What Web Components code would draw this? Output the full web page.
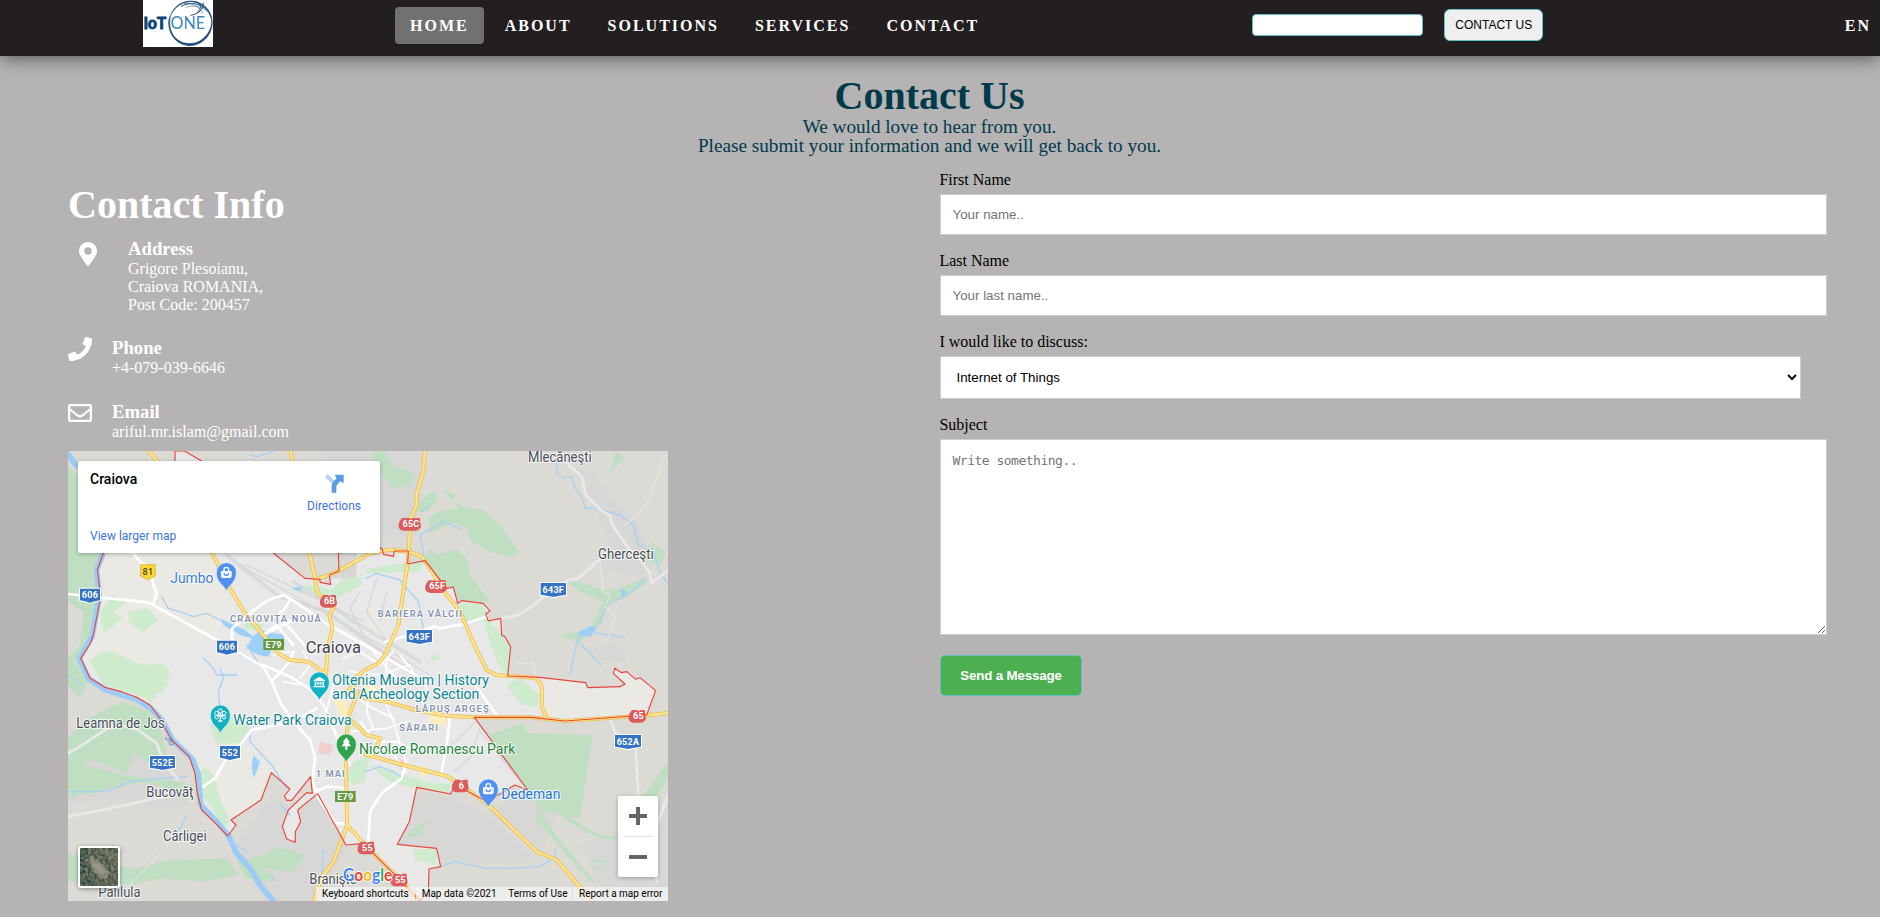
<!DOCTYPE html>
<html lang="en">
<head>
<meta charset="utf-8">
<title>Contact Us</title>
<style>
body{margin:0;background:#b5b3b4;font-family:"Liberation Serif","Times New Roman",serif;font-size:16px;line-height:18px;overflow:hidden}
</style>
</head>
<body>
<contact-page></contact-page>
<script>
const define=(name,html)=>{
  const t=document.createElement('template');t.innerHTML=html;
  customElements.define(name,class extends HTMLElement{
    constructor(){super();this.attachShadow({mode:'open'}).append(t.content.cloneNode(true));}
  });
};

define('site-logo',`
<style>:host{display:block;width:70px;height:47px}svg{display:block}</style>
<svg width="70" height="47" viewBox="15 0 208 141" preserveAspectRatio="none">
<rect x="15" width="208" height="141" fill="#fff"/>
<path d="M98 44C108 16 134 2 160 3C198 6 222 36 221 70C219 108 190 135 158 137C122 138 92 112 91 68C91 59 94 50 98 44M98 44C90 68 95 100 116 118C138 136 172 134 192 117C208 104 218 86 219 66C218 36 196 10 160 5C134 5 112 18 98 44Z" fill="#1c4a78" stroke="#1c4a78" stroke-width="1.5" fill-rule="evenodd"/>
<g fill="none" stroke="#174675" stroke-width="2.8"><path d="M128 19C150 8 170 9 186 17S212 36 218 52"/><path d="M136 11C160 6 186 22 192 40" stroke-width="1.6"/><path d="M156 46C180 42 194 30 194 8"/><path d="M170 4C190 12 190 24 176 38"/><path d="M142 22C164 14 190 20 206 34" stroke-width="1.5"/></g>
<text x="17" y="87" font-family="Liberation Sans,Arial,sans-serif" font-weight="700" font-size="47" fill="#0c4272" stroke="#0c4272" stroke-width="2.5" textLength="67" lengthAdjust="spacingAndGlyphs">IoT</text>
<text x="97" y="87" font-family="Lato,Liberation Sans,sans-serif" font-weight="400" font-size="49" fill="#3a86bd" textLength="102" lengthAdjust="spacingAndGlyphs">ONE</text>
</svg>`);

define('nav-link',`
<style>:host{display:block;padding:10px 15px 9px;border-radius:4px;color:#fff;font-weight:700;font-size:16px;line-height:18px;letter-spacing:2px;white-space:nowrap}
:host([active]){background:#717171}</style><slot></slot>`);

define('site-nav',`
<style>
:host{display:flex;height:56px;background:#231f20;box-shadow:0 0 20px rgba(0,0,0,.65);align-items:flex-start;position:relative}
site-logo{margin-left:143px}
nav{display:flex;gap:6px;margin:7px 0 0 182px}
input{box-sizing:border-box;width:171px;height:22px;border:1px solid #5fc0cb;border-radius:4px;background:#fff;margin:14px 0 0 258px;padding:1px 2px}
button{box-sizing:border-box;width:99px;height:32px;margin:9px 0 0 21px;padding:0;border:1px solid #5fc0cb;border-radius:6px;background:#efefef;color:#000;font:12px "Liberation Sans",Arial,sans-serif}
.lang{margin:7px -6px 0 auto}
</style>
<site-logo></site-logo>
<nav><nav-link active>HOME</nav-link><nav-link>ABOUT</nav-link><nav-link>SOLUTIONS</nav-link><nav-link>SERVICES</nav-link><nav-link>CONTACT</nav-link></nav>
<input aria-label="Search"><button>CONTACT US</button>
<nav-link class="lang">EN</nav-link>`);

define('page-intro',`
<style>:host{display:block;width:1859px;padding-top:19px;text-align:center;color:#013a4b}
h1{margin:0;font-size:40px;line-height:42px}
p{margin:0 0 1px;font-size:19.2px;line-height:19px}</style>
<h1>Contact Us</h1><p>We would love to hear from you.<br>Please submit your information and we will get back to you.</p>`);

define('info-item',`
<style>
:host{display:flex;color:#fff}
.icon{width:var(--icon-w,44px);padding-left:var(--icon-l,0px);flex:none}
h3{margin:0;font-size:18.72px;line-height:21px;padding-bottom:1px}
.body{line-height:18px}
</style>
<div class="icon"><slot name="icon"></slot></div><div class="body"><h3><slot name="title"></slot></h3><slot></slot></div>`);

define('contact-info',`
<style>
:host{display:block;width:600px;color:#fff}
h1{margin:0;font-size:40px;line-height:46px}
svg{display:block;fill:#fff}
.address{--icon-w:49px;--icon-l:11px;height:99px;margin-top:10px}
.phone{height:64px}.email{height:50px}
.mark{padding-top:4px}
</style>
<h1>Contact Info</h1>
<info-item class="address"><svg class="mark" slot="icon" width="18" height="24" viewBox="0 0 384 512"><path d="M172.268 501.67C26.97 291.031 0 269.413 0 192 0 85.961 85.961 0 192 0s192 85.961 192 192c0 77.413-26.97 99.031-172.268 309.67-9.535 13.774-29.93 13.773-39.464 0zM192 272c44.183 0 80-35.817 80-80s-35.817-80-80-80-80 35.817-80 80 35.817 80 80 80z"/></svg><span slot="title">Address</span>Grigore Plesoianu,<br>Craiova ROMANIA,<br>Post Code: 200457</info-item>
<info-item class="phone"><svg slot="icon" width="24" height="24" viewBox="0 0 512 512"><path d="M493.4 24.6l-104-24c-11.3-2.6-22.9 3.3-27.5 13.9l-48 112c-4.2 9.8-1.4 21.3 6.9 28l60.6 49.6c-36 76.7-98.9 140.5-177.2 177.2l-49.6-60.6c-6.8-8.3-18.2-11.1-28-6.9l-112 48C3.9 366.5-2 378.1.6 389.4l24 104C27.1 504.2 36.7 512 48 512c256.1 0 464-207.5 464-464 0-11.2-7.7-20.9-18.6-23.4z"/></svg><span slot="title">Phone</span>+4-079-039-6646</info-item>
<info-item class="email"><svg slot="icon" width="24" height="24" viewBox="0 0 512 512"><path d="M464 64H48C21.49 64 0 85.49 0 112v288c0 26.51 21.49 48 48 48h416c26.51 0 48-21.49 48-48V112c0-26.51-21.49-48-48-48zm0 48v40.805c-22.422 18.259-58.168 46.651-134.587 106.49-16.841 13.247-50.201 45.072-73.413 44.701-23.208.375-56.579-31.459-73.413-44.701C106.18 199.465 70.425 171.067 48 152.805V112h416zM48 400V214.398c22.914 18.251 55.409 43.862 104.938 82.646 21.857 17.205 60.134 55.186 103.062 54.955 42.717.231 80.509-37.199 103.053-54.947 49.528-38.783 82.032-64.401 104.947-82.653V400H48z"/></svg><span slot="title">Email</span>ariful.mr.islam@gmail.com</info-item>
<map-embed></map-embed>`);

const boundary='M345 -20L345 18L373 18L425 48L640 324L735 400L780 403L780 412L812 418L808 390L837 378L835 324L960 308L967 312L970 328L1000 334L1003 318L1045 318L1043 357L1095 347L1160 430L1180 426L1193 475L1205 467L1270 475L1290 498L1277 507L1285 528L1322 520L1325 570L1335 575L1352 605L1343 693L1440 697L1577 713L1583 728L1680 725L1695 717L1660 685L1664 670L1685 683L1700 680L1727 703L1740 698L1787 737L1760 810L1515 828L1415 817L1243 817L1403 1035L1365 1020L1280 1070L1185 1018L1172 1047L1070 1027L1048 1130L1012 1198L1130 1210L1142 1265L1107 1272L1105 1340L1080 1368L1015 1300L935 1220L915 1195L858 1200L773 1046L713 1095L722 1130L706 1160L706 1192L680 1182L667 1145L685 1095L740 1043L757 1045L752 995L695 1066L680 1066L673 1053L690 1032L634 983L603 1065L513 1125L528 1140L503 1173L465 1133L425 1095L412 1045L405 985L388 935L335 885L300 820L270 780L230 757L185 740L135 727L90 700L62 640L90 597L100 570L122 455L112 375L130 324L345 48Z';
const arterials='M262 10L300 60M692 10L697 60M455 322L510 430 555 505 610 570 655 625 690 645 745 650 797 685M748 320L765 400 770 435 780 452 808 465 823 485 808 510 817 550 803 610 798 690M765 403L808 390 850 370 930 325 990 314 1048 320 1085 335 1110 370 1145 430 1200 500 1250 615 1280 675 1310 690 1345 693 1425 698 1445 720 1446 785 1462 823M1095 15L1090 80 1070 145V180L1052 220 1045 340 1030 440 1015 540 975 630 955 655 915 675 890 695M915 760L990 772 1065 795 1165 813 1243 817 1415 817 1515 828 1760 811 1825 804M895 740L865 815 858 900 858 975 860 1060 861 1140 855 1160 818 1255 790 1290 770 1340 763 1368M861 1140L935 1220 1015 1300 1080 1368M865 820L920 870 960 880 950 905M915 928L1030 960 1160 993 1205 1020 1285 1080 1430 1220 1490 1245 1550 1315 1600 1368M910 700L860 740';
const label=(t,x,y,w,c='#474d57',s=43,wt=400)=>`<text x="${x}" y="${y}" textLength="${w}" lengthAdjust="spacingAndGlyphs" font-size="${s}" font-weight="${wt}" fill="${c}">${t}</text>`;
const area=(t,x,y,w)=>`<text x="${x}" y="${y}" textLength="${w}" font-size="28" font-weight="600" fill="#8290ae">${t}</text>`;
const blue=(t,x,y,w,h=42)=>`<path d="M${x} ${y}h${w}v${h-7}q${-w/4} 2 ${-w/2} 7q${-w/4} -5 ${-w/2} -7z" fill="#3573c4" stroke="#fff" stroke-width="6" paint-order="stroke" stroke-linejoin="round"/><text class="sh" x="${x+w/2}" y="${y+h/2+8}">${t}</text>`;
const red=(t,x,y,w,h=40)=>`<path d="M${x+3} ${y+2}h${w/2-10}l7 3 7-3h${w/2-10}v10q5 ${h/2} 1 ${h-20}q-4 8-14 8h${-w+24}q-10 0-14-8q-4-${h/2-10} 3-${h/2+2}z" fill="#dc5b5c"/><text class="sh" x="${x+w/2}" y="${y+h/2+9}">${t}</text>`;
const green=(t,x,y)=>`<rect x="${x}" y="${y}" width="62" height="33" fill="#649a41"/><text class="sh" x="${x+31}" y="${y+26}">${t}</text>`;
const pin=(x,y,c,g)=>`<g transform="translate(${x} ${y})"><path d="M0 57C-3 38-30 32-30 0A30 30 0 0 1 30 0C30 32 3 38 0 57Z" fill="${c}" stroke="#fff" stroke-width="1.5"/>${g}</g>`;
const bag='<path d="M-16-5H16V10Q16 16 10 16H-10Q-16 16-16 10Z" fill="#fff"/><path d="M-7-4V-9A7 7 0 0 1 7-9V-4" fill="none" stroke="#fff" stroke-width="4"/><path d="M-7 1A7 7 0 0 0 7 1" fill="none" stroke="#4285f4" stroke-width="3.5"/>';

define('map-canvas',`
<style>:host{display:block;width:600px;height:450px}svg{display:block;font-family:Roboto,sans-serif}
text{paint-order:stroke;stroke:#fff;stroke-opacity:.85;stroke-width:6px;stroke-linejoin:round}
.sh{fill:#fff;stroke:none;font-size:27px;font-weight:700;text-anchor:middle;letter-spacing:.8px}
.r{fill:none;stroke-linejoin:round;stroke-linecap:round}</style>
<svg width="600" height="450" viewBox="24 18 1800 1350">
<defs><clipPath id="city"><path d="${boundary}"/></clipPath></defs>
<rect x="24" y="18" width="1800" height="1350" fill="#dbdad5"/>
<g fill="#d7d7d6"><path d="M780 18H1090V80L1070 150V270H940L900 200 800 100ZM1540 60L1600 80 1650 150 1730 230 1760 300 1700 340 1650 290 1600 180ZM1600 330L1770 350 1760 400 1620 370ZM24 860L180 830 260 850 320 960 350 1010 400 1020 370 1090 290 1090 180 1060 24 1080ZM715 1100L773 1050 860 1200 770 1368H610L560 1250 530 1190 640 1050ZM1075 1040L1180 1060 1290 1110 1430 1250 1140 1250 1020 1190ZM1250 830L1500 1090 1440 1230 1290 1100 1410 1040ZM1560 1200L1824 1100V1368H1650ZM1580 610L1680 590 1700 650 1600 640Z"/></g>
<g fill="#c0dfc2"><path d="M24 60L60 100 120 150V330L112 375 122 455 95 590 62 640 90 700 60 760 24 720V640L60 600 70 500 24 470ZM940 18H975L1005 65 1060 85 1055 120 995 130 965 85 940 55ZM1065 200L1078 170 1110 145Q1140 130 1130 165L1105 200ZM1150 133L1187 150 1175 170ZM1105 220Q1140 190 1195 190L1180 170 1225 190 1265 193 1325 245 1378 322 1350 335 1290 320 1230 285 1220 245 1180 233 1110 265ZM1110 310L1125 330 1190 312 1220 340 1230 390 1290 470 1195 465 1180 430 1155 430 1095 345ZM1665 18L1695 40 1645 85 1660 50ZM1770 290L1818 320 1800 360 1750 340ZM1520 410L1560 410 1630 435 1680 430 1750 400 1765 410 1730 435 1690 460 1640 480 1625 535 1560 590 1490 572 1590 555 1620 490 1630 470 1560 440ZM24 880L70 830 130 795 190 770 270 800 300 850 320 930 270 955 220 925 200 985 90 940 24 1010ZM24 1010L70 960 190 990 350 1010 400 1020 395 1050 250 1010 110 1040 24 1060ZM24 1220L110 1260 230 1270 330 1245 500 1240 540 1290 430 1310 300 1300 220 1320 24 1310ZM530 1250Q610 1240 650 1205L740 1230 700 1280 610 1270 650 1310 560 1300ZM1243 817L1290 870 1385 835 1403 865 1598 870 1560 1120 1440 1095 1330 920 1403 1035 1310 915ZM1700 1120L1824 950V1000L1735 1140ZM1430 1090L1500 1185 1610 1315 1590 1310 1430 1125ZM1500 1090Q1610 1190 1680 1170L1670 1182Q1600 1190 1500 1110ZM1025 1180L1103 1122 1080 1170ZM1600 1245H1645V1252H1607V1270H1640V1276H1600Z"/></g>
<g clip-path="url(#city)">
<rect x="24" y="0" width="1800" height="1400" fill="#e8e8e8"/>
<path d="M130 320H460L515 420 470 560 300 630 250 700 340 860 480 990 560 900 640 980 600 1070 490 1130 360 880 200 730 70 700 60 630ZM640 250H860V400H720ZM910 470L960 480 970 580 915 560ZM1480 700L1800 700 1750 810 1450 810ZM1000 1200L1110 1210 1105 1280Z" fill="#ebe9e3"/>
<path d="M400 120H890V400L740 400 640 324ZM1660 690L1690 710 1600 730Z" fill="#d9d7d1"/>
<g fill="#cfebce"><path d="M120 500L160 450 200 475 160 500 190 520 130 565ZM205 500L260 490 295 525 250 560 205 530ZM90 650Q120 610 160 620L230 655 270 660 310 655 330 680 310 740 260 760 200 740 130 720ZM225 680L310 675 325 720 280 760 260 800 290 810 320 870 350 910 340 870 270 780ZM450 850L480 780 530 820 570 850 540 895 470 895ZM690 430L760 420 815 435 850 400 900 395 925 370 1045 355 1095 345 1080 380 900 385 905 420 830 460 720 445ZM870 515L890 515 895 540 860 530ZM560 525L610 540 595 560 550 550ZM1193 475L1270 475 1285 525 1330 570 1352 605 1345 700 1310 650 1270 530 1220 530ZM1110 635L1125 625 1140 640 1120 650ZM1340 720L1380 700 1440 750 1430 790 1380 775ZM860 1000L880 950 930 930 915 1010 880 1020ZM925 960L1030 990 1110 1015 1180 1015 1160 1055 990 1010ZM1060 1215L1130 1210 1130 1260 1065 1245ZM430 960L460 990 480 1060 510 1130 490 1150 450 1080 410 1030Z"/></g>
<path d="M780 890L820 900 810 930 775 925ZM1015 940L1035 950 1030 975 1010 960Z" fill="#efcfd0"/>
<path d="M820 760L860 770 870 830 845 820ZM1110 810L1160 815 1155 845 1110 835ZM1085 960L1105 965 1095 1000 1080 990ZM915 710L965 730 950 770 915 760Z" fill="#faeebc"/>
<g class="r" stroke="#d8dadc" stroke-width="22"><path d="M500 330L650 450 800 500 980 630 1110 720" stroke-width="12"/><path d="M700 410L900 540 1080 650" stroke-width="10"/></g>
<g class="r" stroke="#d6d7da" stroke-width="4"><path d="M520 350L860 540 1110 690M560 360L850 500 910 530M900 440L870 490 920 590M950 400L920 500 975 580M980 440L960 530M1245 830L1200 880 1130 930M1260 850L1230 940 1180 980M1300 910L1380 1010 1500 1140M1260 860L1400 1020"/></g>
</g>
<g class="r" stroke="#9ccbf5" stroke-width="17"><path d="M22 25L50 62M130 324L110 375 118 455 96 575 58 640 86 700 135 734 230 764 275 792 305 824 338 885 398 943 414 985 422 1080 468 1128 505 1170 530 1225 570 1270 600 1320 640 1368"/></g>
<path d="M480 520L510 535 555 555 580 575 600 555 670 570 675 600 635 615 625 635 595 630 560 610 575 580 540 570 490 540ZM580 930L600 950 590 980 580 1000 575 960ZM695 430L725 425 720 440ZM1680 430L1700 440 1690 462ZM1555 560L1600 540 1608 555 1590 575 1555 570ZM635 1285L640 1305 636 1310Z" fill="#9dd0f7"/>
<g class="r" stroke="#a9d1f2" stroke-width="4"><path d="M305 455L325 490 360 500 400 515 440 505 480 525M640 20L590 35 570 30M480 670L490 700 475 740 480 790M570 860L570 890 635 960 680 1030M24 690L70 720M540 630L600 660 560 600M1110 175L1085 200M1080 270L1150 230 1210 255M1080 270L1095 345M918 400L950 385 1020 405 1075 470 1090 550 1110 600M1490 50L1490 85 1510 100 1535 95 1545 130 1565 155 1575 190 1610 190 1680 210 1720 240 1735 300 1780 320 1790 350 1800 380 1824 420M1760 400L1700 450 1640 480 1620 530 1590 575 1555 570 1530 690M1605 565L1650 570 1695 578M1555 590L1580 615 1625 660M24 1040L140 1040 210 1010 300 1000 380 995M510 1190L560 1220M1142 1265L1185 1250 1280 1270 1350 1270 1440 1265 1480 1240 1488 1215M660 1075L690 1110M915 980L960 965 1000 980 1030 1000M430 640L460 670 470 690 530 690M350 1170L380 1110M790 1215L785 1310"/></g>
<g class="r" stroke="#eae9e9" stroke-width="8"><path d="M24 1115L140 1092 290 1060 330 1055M24 925L75 895 145 848 180 840 235 855 290 895 312 955 352 1000M1515 50L1565 93 1577 150 1622 195 1650 213 1657 240 1705 310 1738 340 1770 385 1775 415 1825 375M1325 520L1370 512 1415 485 1445 460 1525 405 1555 400 1620 342M1650 825L1668 865 1705 878 1727 905 1735 1055M1824 1050L1770 1200 1790 1310"/><path d="M1818 30L1753 190 1690 245M1620 350L1630 440 1650 450 1635 485 1668 515 1640 590M210 1320L330 1195M1370 655H1420L1425 690" stroke-width="3"/></g>
<g class="r" stroke="#fff" stroke-width="8"><path d="M24 447L120 457 265 472 380 535 470 585 540 625 610 665 635 710 665 780 700 830 750 885 765 935 758 1010 775 1060 825 1133 860 1138M515 600L517 550 575 500 625 465 670 450 720 480 790 530 860 570 915 600 990 645 1110 715M215 320L240 350 270 370 280 420 290 445 280 475M430 1025L465 1000 500 940 540 900 575 855 700 830 770 790M610 570L690 530 730 520M690 465L675 490 655 510 750 620M615 565L650 540 700 600M610 660L700 700 760 740 790 780M975 590L1030 575 1120 545 1140 550 1220 535 1280 515M635 710L690 650 700 620M765 1040L800 1025 850 1028M1035 965L1025 1000 965 1045 930 1100 925 1190M1230 700L1260 740 1310 810M1170 815L1160 900 1145 980"/></g>
<g class="r" stroke="#fff" stroke-width="5"><path d="M850 640L900 620 960 660 1000 620M870 680L960 690 1050 660M900 700L980 760 1050 790M940 620L1000 690 1050 750M860 730L920 780 1000 820M870 860L980 850 1040 830M900 830L950 890 1010 890 1050 910M930 730L920 800 940 850M980 650L970 760 1000 830 1040 960M1020 630L1100 730M790 780L830 880M730 620L750 660 720 700M640 630L690 620M670 710L720 720M920 860L1000 930 1040 980M820 715L800 800 870 960"/></g>
<path class="r" d="${arterials}" stroke="#ecc04f" stroke-width="12"/>
<path class="r" d="${arterials}" stroke="#fde391" stroke-width="7"/>
<path d="${boundary}" fill="none" stroke="#e8453c" stroke-width="3.4" stroke-linejoin="round"/>
${blue('606',60,431,60)}${blue('606',471,587,60)}${blue('643F',1442,414,76)}${blue('643F',1040,555,76)}${blue('552E',270,933,75)}${blue('552',480,903,60)}${blue('652A',1665,870,78)}
${red('65C',1023,217,60)}${red('65F',1103,404,57)}${red('6B',787,448,44)}${red('65',1713,793,45)}${red('6',1183,1002,43)}${red('55',900,1188,45)}${red('55',999,1284,44)}
${green('E79',610,582)}${green('E79',825,1038)}
<path d="M242 359H286V393L264 404 242 393Z" fill="#fdd835" stroke="#c9a92d" stroke-width="2"/><text class="sh" x="264" y="391" style="fill:#4b4326;font-weight:500">81</text>
${pin(499,383,'#5090f3',bag)}${pin(1285,1032,'#5090f3',bag)}
${pin(778,711,'#12b1c4','<path d="M-17-5L0-16 17-5V-2H-17ZM-14 0H-9V11H-14ZM9 0H14V11H9ZM-17 12H17V16H-17ZM-6 10V0H-3L0 4 3 0H6V10H3V5L0 8-3 5V10Z" fill="#fff"/>')}
${pin(481,810,'#12b1c4','<g fill="none" stroke="#fff" stroke-width="3"><circle cy="-12" r="6"/><circle cx="-11" cy="-5" r="6"/><circle cx="11" cy="-5" r="6"/><circle cx="-11" cy="7" r="5"/><circle cx="11" cy="7" r="5"/><path d="M0-6V17M-9-3L0 6 9-3M-6 18H6" stroke-width="4"/></g>')}
${pin(859,897,'#32a350','<path d="M0-20L11-5H6L14 7H3V17H-3V7H-14L-6-5H-11Z" fill="#fff"/>')}
${label('Jumbo',331,414,129,'#3b7ddd')}${label('Dedeman',1324,1062,177,'#1f73e0')}
${label('Oltenia Museum | History',817,721,470,'#0b8593')}${label('and Archeology Section',817,763,441,'#0b8593')}
${label('Water Park Craiova',520,840,355,'#0b8593')}${label('Nicolae Romanescu Park',897,926,469,'#1b853b')}
${label('Craiova',737,623,166,'#3e434b',49,400)}
${label('Mlecăneşti',1404,50,191)}${label('Gherceşti',1614,341,167)}${label('Leamna de Jos',49,848,265)}${label('Bucovăţ',259,1056,141)}${label('Cârligei',309,1188,131)}${label('Palilula',115,1355,127)}${label('Branişte',748,1316,142)}
${area('CRAIOVIŢA NOUĂ',510,532,272)}${area('BARIERA VÂLCII',953,517,253)}${area('LĂPUŞ ARGEŞ',1067,802,219)}${area('SĂRARI',1018,859,116)}${area('1 MAI',767,997,87)}
<text x="326" y="885" font-size="25" fill="#3f83c7" font-style="italic" style="stroke:none" transform="rotate(55 326 870)">Jiu</text>
<text x="849" y="1307" font-size="50" font-family="Lato,Roboto,sans-serif" font-weight="700" textLength="148" lengthAdjust="spacingAndGlyphs"><tspan fill="#4285f4">G</tspan><tspan fill="#ea4335">o</tspan><tspan fill="#fbbc05">o</tspan><tspan fill="#4285f4">g</tspan><tspan fill="#34a853">l</tspan><tspan fill="#ea4335">e</tspan></text>
</svg>`);

define('place-card',`
<style>:host{display:flex;justify-content:space-between;box-sizing:border-box;width:302px;height:92px;background:#fff;border-radius:2px;box-shadow:0 1px 4px rgba(0,0,0,.3);padding:10px 19px 0 12px;font-family:Roboto,sans-serif;color:#3a74e0;font-size:12px;line-height:16px}
.l{display:flex;flex-direction:column;gap:41px}
b{font-size:14px;font-weight:500;color:#000}
.r{display:flex;flex-direction:column;align-items:center;padding-top:3px;gap:5px}
.r svg{display:block}
</style>
<div class="l"><b>Craiova</b><span>View larger map</span></div>
<div class="r"><svg width="19" height="19" viewBox="0 0 57 57"><path d="M0 9L8 1 30 22 22 31Z" fill="#b5d0f5"/><path d="M20 56V36Q20 28 26 22L35 13 29 2H56V28L46 22 38 30Q34 34 34 39V56Z" fill="#5a9be6"/></svg><span>Directions</span></div>`);

define('zoom-control',`
<style>:host{display:flex;flex-direction:column;width:40px;height:81px;background:#fff;border-radius:2px;box-shadow:0 1px 4px rgba(0,0,0,.3)}svg{display:block}</style>
<svg width="40" height="81" viewBox="0 0 120 243"><path d="M33 54H54V33H66V54H87V66H66V87H54V66H33ZM33 177H87V189H33Z" fill="#666"/><path d="M15 121H105" stroke="#e0e0e0" stroke-width="3"/></svg>`);

define('satellite-toggle',`
<style>:host{display:block;box-sizing:border-box;width:42px;height:42px;border:2px solid #fff;border-radius:3px;box-shadow:0 1px 4px rgba(0,0,0,.4);overflow:hidden}svg{display:block}</style>
<svg width="38" height="38" viewBox="0 0 38 38"><defs><filter id="n" x="0" y="0" width="1" height="1"><feTurbulence type="fractalNoise" baseFrequency=".35" numOctaves="3" seed="4"/><feColorMatrix values="0 0 0 0 .3  0 0 0 0 .34  0 0 0 0 .28  1.6 0 0 0 -.5"/></filter></defs>
<rect width="38" height="38" fill="#465040"/><path d="M0 0H12L6 12 9 24 16 38H0Z" fill="#30443a"/><path d="M9 8L20 14 29 24 27 31 19 29 12 20Z" fill="#827e6e"/><path d="M20 0L38 6V16L30 12Z" fill="#56603f"/><path d="M10 8L15 15 20 16 25 24 22 27 15 20Z" fill="#9d9584"/><rect width="38" height="38" filter="url(#n)"/></svg>`);

define('map-credits',`
<style>:host{display:flex;justify-content:space-between;box-sizing:border-box;width:352px;height:14px;font:10px/14px Roboto,sans-serif;color:#000;white-space:nowrap}
span{background:rgba(245,245,245,.72);padding:0 6px;box-sizing:border-box}
.a{width:99px}.b{width:86px}.c{width:70px}.d{width:95px}</style>
<span class="a">Keyboard shortcuts</span><span class="b">Map data ©2021</span><span class="c">Terms of Use</span><span class="d">Report a map error</span>`);

define('map-embed',`
<style>:host{display:block;position:relative;width:600px;height:450px;overflow:hidden}
place-card,zoom-control,satellite-toggle,map-credits{position:absolute}
place-card{left:10px;top:10px}zoom-control{right:10px;bottom:24px}satellite-toggle{left:10px;bottom:13px}map-credits{right:0;bottom:0}</style>
<map-canvas></map-canvas><place-card></place-card><satellite-toggle></satellite-toggle><map-credits></map-credits><zoom-control></zoom-control>`);

define('form-field',`
<style>:host{display:grid;gap:5.6px;justify-items:start;line-height:18px;color:#000}label{position:relative;left:-.6px}</style>
<label><slot name="label"></slot></label><slot></slot>`);

define('contact-form',`
<style>
:host{display:block;width:887px}
form{display:grid;gap:16.4px}
input,select,textarea{box-sizing:border-box;display:block;width:887px;margin:0;padding:12px 11.5px;border:1px solid #ccc;border-radius:0;background:#fff;font:13.333px "Liberation Sans",Arial,sans-serif;color:#000}
input{height:41px}select{width:861px;height:43px}
textarea{height:196px;font:13px/15px "DejaVu Sans Mono",Consolas,monospace;letter-spacing:-.5px;padding-top:13px;resize:vertical}
::placeholder{color:#757575}
button{width:142px;height:41px;margin-top:3.6px;padding:0;border:1px solid #5fc0cb;border-radius:5px;background:#4caf50;color:#fff;font:700 13.333px "Liberation Sans",Arial,sans-serif;letter-spacing:-.15px}
</style>
<form>
<form-field><span slot="label">First Name</span><input placeholder="Your name.."></form-field>
<form-field><span slot="label">Last Name</span><input placeholder="Your last name.."></form-field>
<form-field><span slot="label">I would like to discuss:</span><select><option>Internet of Things</option></select></form-field>
<form-field><span slot="label">Subject</span><textarea placeholder="Write something.."></textarea></form-field>
<button type="button">Send a Message</button>
</form>`);

define('contact-page',`
<style>:host{display:block;height:917px;overflow:hidden}
main{display:flex;align-items:flex-start;padding-left:68px}
contact-info{margin-top:26px}
contact-form{margin:14.8px 0 0 272px}</style>
<site-nav></site-nav><page-intro></page-intro><main><contact-info></contact-info><contact-form></contact-form></main>`);
</script>
</body>
</html>
